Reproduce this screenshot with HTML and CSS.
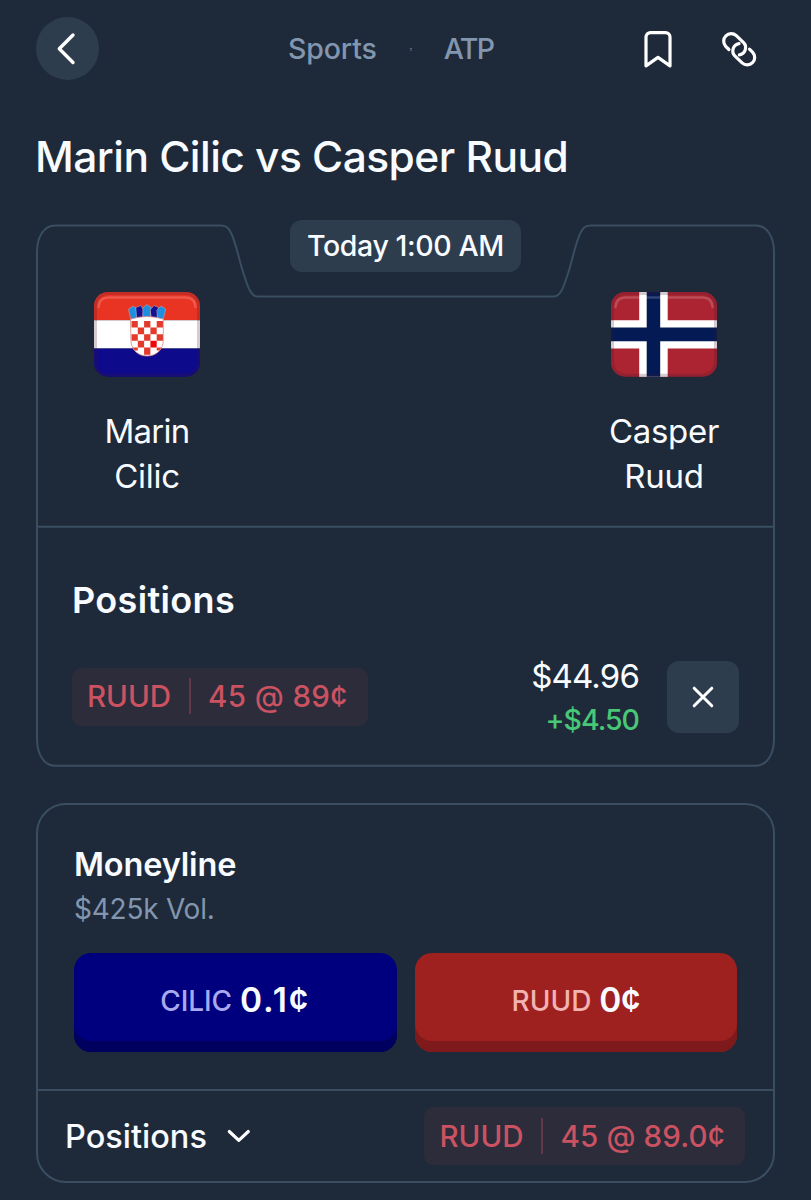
FILE: index.html
```html
<!DOCTYPE html>
<html lang="en">
<head>
<meta charset="utf-8">
<title>Marin Cilic vs Casper Ruud</title>
<link rel="stylesheet" href="styles.css">
</head>
<body>
<header class="topbar">
  <button class="back" aria-label="Back"><svg width="63" height="63" viewBox="0 0 63 63"><path d="M37 18 23.300 31.700 37 45.500"/></svg></button>
  <nav class="crumbs"><span class="sports">Sports</span><svg class="sep" width="4" height="5" viewBox="0 0 4 5"><path d="M1.200 1.400h1.200v1.200L1.700 3.600"/></svg><span class="atp">ATP</span></nav>
  <div class="tools">
    <svg width="28" height="38" viewBox="0 0 28 38"><path d="M2 35.900V7.100a4.500 4.500 0 0 1 4.500-4.500h15a4.500 4.500 0 0 1 4.500 4.500v28.800L14 27.400Z"/></svg>
    <svg width="35" height="35" viewBox="0 0 35 35"><path d="M6.900 17.500 3.700 14.300A7.500 7.500 0 0 1 14.300 3.700L21.600 10.700A7.300 7.300 0 0 1 17.400 22.900M27.500 17.100 30.700 20.300A7.500 7.500 0 0 1 20.100 30.900L12.800 23.900A7.300 7.300 0 0 1 17 11.700"/></svg>
  </div>
</header>
<h1 class="title">Marin Cilic vs Casper Ruud</h1>

<section class="event">
  <svg class="frame" width="739" height="548" viewBox="0 0 739 548"><path d="M1 32C1 17 8 5.400 19 5.400H185.300C191 5.400 193.500 9 196 15C202 30 203 41 209 58C212 67 215 76.600 222 76.600H517.500C524.500 76.600 527.500 67 530.500 58C536.500 41 537.500 30 543.500 15C546 9 548.500 5.400 554.200 5.400H720C731 5.400 738 17 738 32V519C738 534 731 545.700 720 545.700H19C8 545.700 1 534 1 519ZM1 306.700H738"/></svg>
  <div class="time">Today 1:00 AM</div>
  <div class="players">
    <div class="player">
      <svg class="flag" width="106" height="85" viewBox="0 0 106 85">
        <defs><clipPath id="flagclip"><rect width="106" height="84.700" rx="14"/></clipPath>
        <clipPath id="shield"><path d="M36.900 27Q53 22 69.300 27V48C69.300 58 62 64 53.100 64S36.900 58 36.900 48Z"/></clipPath></defs>
        <g clip-path="url(#flagclip)">
          <path fill="#e93423" d="M0 0h106v28.200H0z"/><path fill="#fff" d="M0 28.200h106v28.300H0z"/><path fill="#0e0a8c" d="M0 56.500h106V85H0z"/>
          <rect class="shade" x="1.500" y="1.500" width="103" height="81.700" rx="13"/>
          <path class="shine" d="M4.500 15Q5 5.500 15 5.500H91Q101 5.500 101.500 15"/>
        </g>
        <g stroke="#b3a6b8" stroke-width=".6">
          <path fill="#1c8fe0" d="M34.700 17 39.500 14 43.500 18 42.500 27 37.500 28Z"/>
          <path fill="#151090" d="M42 15.500 46.500 13.500 49.500 17.500 48.500 26 43 27Z"/>
          <path fill="#1c8fe0" d="M49 15.500 53 12.500 57 15.500 56.500 25.500H49.500Z"/>
          <path fill="#151090" d="M56.500 17.500 60 13.500 64.500 15.500 63 27 57.500 26Z"/>
          <path fill="#1c8fe0" d="M63 18 67 14 71.700 17 69 28 64 27Z"/>
        </g>
        <g clip-path="url(#shield)"><path fill="#fff" d="M36 22h34v43H36z"/>
          <path fill="#e33a2c" d="M37.500 29h6.300v6.600h-6.300zM50.100 29h6.300v6.600h-6.300zM62.700 29h6.300v6.600h-6.300zM43.800 35.600h6.300v6.600h-6.300zM56.400 35.600h6.300v6.600h-6.300zM37.500 42.200h6.300v6.600h-6.300zM50.100 42.200h6.300v6.600h-6.300zM62.700 42.200h6.300v6.600h-6.300zM43.800 48.800h6.300v6.600h-6.300zM37.500 55.400h6.300v3h-6.300zM50.100 55.400h6.300v7.400h-6.300zM62.700 55.400h6.300v3h-6.300z"/>
          <path fill="#f00808" d="M56.400 48.800h6.300v6.600h-6.300z"/></g>
        <path fill="none" stroke="#d88a8a" stroke-width=".8" d="M36.900 27Q53 22 69.300 27V48C69.300 58 62 64 53.100 64S36.900 58 36.900 48Z"/>
      </svg>
      <p class="name"><span class="marin">Marin</span><br>Cilic</p>
    </div>
    <div class="player">
      <svg class="flag" width="106" height="85" viewBox="0 0 106 85">
        <g clip-path="url(#flagclip)">
          <path fill="#ac2431" d="M0 0h106v85H0z"/>
          <path fill="#fff" d="M28.200 0h28.500v85H28.200zM0 28.200h106v28.300H0z"/>
          <path fill="#041a54" d="M35.700 0h13.500v85H35.700zM0 35.500h106v13.800H0z"/>
          <rect class="shade" x="1.500" y="1.500" width="103" height="81.700" rx="13"/>
          <path class="shine" d="M4.500 15Q5 5.500 15 5.500H91Q101 5.500 101.500 15"/>
        </g>
      </svg>
      <p class="name">Casper<br>Ruud</p>
    </div>
  </div>
  <div class="holdings">
    <h2 class="h-pos">Positions</h2>
    <div class="row">
      <div class="pill"><span>RUUD</span><i class="bar"></i><span class="amount">45 @ 89¢</span></div>
      <div class="value"><span class="total">$44.96</span><span class="gain">+$4.50</span></div>
      <button class="close" aria-label="Close position"><svg width="24" height="24" viewBox="0 0 24 24"><path d="M3.200 3.200 20.800 20.800M20.800 3.200 3.200 20.800"/></svg></button>
    </div>
  </div>
</section>

<section class="market">
  <div class="market-main">
    <h2 class="h-money">Moneyline</h2>
    <p class="vol">$425k Vol.</p>
    <div class="bets">
      <button class="bet cilic"><span class="who">CILIC</span><b class="price">0.1¢</b></button>
      <button class="bet ruud"><span class="who">RUUD</span><b class="price">0¢</b></button>
    </div>
  </div>
  <footer class="market-foot">
    <span class="f-pos">Positions</span>
    <svg class="chev" width="24" height="14" viewBox="0 0 24 14"><path d="M2.300 2.500 11.800 11.300 21.300 2.500"/></svg>
    <div class="pill"><span>RUUD</span><i class="bar"></i><span class="amount precise">45 @ 89.0¢</span></div>
  </footer>
</section>
</body>
</html>
```

FILE: styles.css
```css
* { box-sizing: border-box; }
body { margin: 0; width: 811px; height: 1200px; overflow: hidden; background: #1e2a39; color: #f8fbff; font-family: Inter, "Liberation Sans", sans-serif; }
button { border: 0; padding: 0; margin: 0; font: inherit; color: inherit; }
h1, h2, p { margin: 0; font-weight: 500; white-space: nowrap; }
svg { display: block; flex: none; fill: none; stroke-linecap: round; stroke-linejoin: round; }
.topbar { display: flex; align-items: center; height: 80px; padding: 17px 54px 0 36px; }
.back { width: 63px; height: 63px; border-radius: 50%; background: #2e3d4e; }
.back path { stroke: #fff; stroke-width: 3.400; }
.crumbs { display: flex; align-items: center; margin-left: 189px; color: #8396af; font-size: 28.500px; font-weight: 500; line-height: 62px; }
.sports { letter-spacing: -.14px; }
.atp { letter-spacing: -1.670px; }
.sep { margin: 1px 31px 0 32px; }
.sep path { stroke: #64768c; stroke-width: 1; }
.tools { display: flex; align-items: center; gap: 50px; margin-left: auto; padding-top: 1px; }
.tools path { stroke: #fff; stroke-width: 3.200; }
.title { padding: 46.500px 0 0 35px; font-size: 42.500px; line-height: 60px; letter-spacing: -.55px; }

.event { position: relative; height: 548px; margin: 33.500px 36px 0; }
.frame { position: absolute; inset: 0; }
.frame path { stroke: #3a4d61; stroke-width: 2; }
.time { position: relative; display: flex; justify-content: center; width: 231px; margin: 0 auto; border-radius: 12px; background: #2e3d4e; font-size: 28.500px; font-weight: 500; line-height: 51.500px; letter-spacing: -.4px; }
.players { position: relative; display: flex; justify-content: space-between; height: 255px; padding: 20.500px 58px 0; }
.player { display: flex; flex-direction: column; align-items: center; width: 106px; }
.shade { stroke: #40182e; stroke-opacity: .22; stroke-width: 3; }
.shine { stroke: #fff; stroke-opacity: .18; stroke-width: 2.500; }
.name { margin-top: 32px; font-size: 33px; font-weight: 400; line-height: 45px; letter-spacing: -.3px; text-align: center; }
.marin { letter-spacing: -.8px; }
.holdings { position: relative; padding: 53px 36px 0; }
.h-pos { font-size: 36px; font-weight: 600; line-height: 40px; letter-spacing: .35px; }
.row { display: flex; align-items: center; height: 72px; margin-top: 41px; }
.pill { display: flex; align-items: center; height: 58px; padding: 0 20px 1px 15px; border-radius: 9px; background: #2c2c3b; color: #cb5261; font-size: 29.500px; font-weight: 500; white-space: nowrap; }
.bar { width: 2px; height: 36px; margin: 0 17.500px; background: #643846; }
.amount { letter-spacing: .4px; }
.precise { letter-spacing: .16px; }
.value { display: flex; flex-direction: column; align-items: flex-end; margin-left: auto; padding-top: 3px; line-height: 44px; }
.total { font-size: 33px; letter-spacing: -.85px; }
.gain { color: #48c777; font-size: 28.500px; font-weight: 500; letter-spacing: -1px; }
.close { display: grid; place-items: center; width: 72px; height: 72px; margin-left: 28px; border-radius: 12px; background: #2e3d4e; }
.close path { stroke: #fff; stroke-width: 3; }

.market { height: 380px; margin: 35px 36px 0; border: 2px solid #3a4d61; border-radius: 30px; }
.market-main { height: 284px; padding: 38px 36px 0; }
.h-money { font-size: 32.500px; font-weight: 600; line-height: 44px; letter-spacing: -.15px; }
.vol { color: #8396af; font-size: 28px; font-weight: 400; line-height: 44px; letter-spacing: -.24px; }
.bets { display: grid; grid-template-columns: 1fr 1fr; gap: 18px; margin-top: 22px; }
.bet { display: flex; align-items: center; justify-content: center; gap: 8px; height: 99px; padding-bottom: 5px; border-radius: 17px; }
.cilic { background: #00007e; box-shadow: inset 0 -11px #00005e; }
.ruud { background: #9e201f; box-shadow: inset 0 -11px #7f1a1c; }
.who { padding-top: 2px; font-size: 28px; font-weight: 500; }
.cilic .who { color: #a9a9ef; letter-spacing: -.1px; }
.ruud .who { color: #f2b3b3; }
.price { font-size: 33.500px; font-weight: 600; letter-spacing: -.5px; }
.cilic .price { letter-spacing: 1.900px; }
.market-foot { display: flex; align-items: center; height: 92px; border-top: 2px solid #3a4d61; padding: 0 28px 0 27px; }
.f-pos { font-size: 32.500px; font-weight: 500; }
.chev { margin-left: 20px; }
.chev path { stroke: #fff; stroke-width: 3.200; }
.market-foot .pill { margin-left: auto; }
```
